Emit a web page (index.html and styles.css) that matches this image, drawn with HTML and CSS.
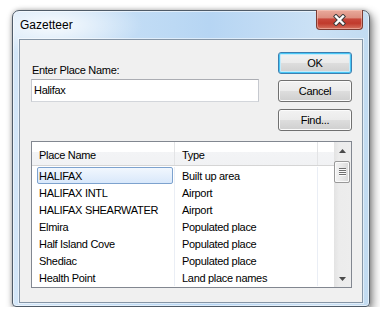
FILE: index.html
```html
<!DOCTYPE html>
<html lang="en">
<head>
  <meta charset="UTF-8">
  <title>Gazetteer</title>
  <link rel="stylesheet" href="styles.css">
</head>
<body>
  <div class="window">
    <div class="titlebar">
      <span class="title">Gazetteer</span>
      <button class="close" aria-label="Close">
        <svg width="13" height="12" viewBox="0 0 13 12">
          <path d="M3 2.5 L10 9.5 M10 2.5 L3 9.5" stroke="#3d3d3d" stroke-width="4.4" stroke-linecap="square"/>
          <path d="M3 2.5 L10 9.5 M10 2.5 L3 9.5" stroke="#ffffff" stroke-width="2.4" stroke-linecap="square"/>
        </svg>
      </button>
    </div>

    <div class="client">
      <div class="top">
        <div class="entry">
          <label class="label" for="place">Enter Place Name:</label>
          <input class="textbox" id="place" type="text" value="Halifax">
        </div>
        <div class="buttons">
          <button class="btn default">OK</button>
          <button class="btn">Cancel</button>
          <button class="btn find">Find...</button>
        </div>
      </div>

      <div class="listview">
        <div class="lv-main">
          <div class="lv-header">
            <div class="hcol">Place Name</div>
            <div class="hcol">Type</div>
            <div class="hcol last"></div>
          </div>
          <div class="lv-body">
            <div class="row"><div class="cell name"><div class="item selected">HALIFAX</div></div><div class="cell type">Built up area</div></div>
            <div class="row"><div class="cell name"><div class="item">HALIFAX INTL</div></div><div class="cell type">Airport</div></div>
            <div class="row"><div class="cell name"><div class="item">HALIFAX SHEARWATER</div></div><div class="cell type">Airport</div></div>
            <div class="row"><div class="cell name"><div class="item">Elmira</div></div><div class="cell type">Populated place</div></div>
            <div class="row"><div class="cell name"><div class="item">Half Island Cove</div></div><div class="cell type">Populated place</div></div>
            <div class="row"><div class="cell name"><div class="item">Shediac</div></div><div class="cell type">Populated place</div></div>
            <div class="row"><div class="cell name"><div class="item">Health Point</div></div><div class="cell type">Land place names</div></div>
          </div>
        </div>
        <div class="vscroll">
          <div class="arrow">
            <svg width="7" height="4" viewBox="0 0 7 4"><polygon points="3.5,0 7,4 0,4" fill="#4a4a4a"/></svg>
          </div>
          <div class="thumb">
            <svg width="7" height="8" viewBox="0 0 7 8">
              <path d="M0 0.5 H7 M0 2.5 H7 M0 4.5 H7 M0 6.5 H7" stroke="#6e6e6e" stroke-width="1"/>
              <path d="M0 1.5 H7 M0 3.5 H7 M0 5.5 H7 M0 7.5 H7" stroke="#fbfbfb" stroke-width="1"/>
            </svg>
          </div>
          <div class="track"></div>
          <div class="arrow">
            <svg width="7" height="4" viewBox="0 0 7 4"><polygon points="0,0 7,0 3.5,4" fill="#4a4a4a"/></svg>
          </div>
        </div>
      </div>
    </div>
  </div>
</body>
</html>
```

FILE: styles.css
```css
body {
  margin: 0;
  padding: 10px 0 0 12px;
  background: #ffffff;
  font-family: "Liberation Sans", Arial, sans-serif;
  font-size: 11px;
  color: #000000;
}
.window {
  width: 344px;
  padding: 0 6px 3px 6px;
  border: 1px solid #4f5b68;
  border-radius: 7px 7px 4px 4px;
  background:
    radial-gradient(ellipse 90px 30px at 40px 14px, rgba(255,255,255,0.85), rgba(255,255,255,0) 100%),
    linear-gradient(90deg, #d3e6f8 0%, #bcd9f4 45%, #b6d5f3 55%, #cbe1f5 85%, #c2dbf1 100%);
  box-shadow: inset 0 0 0 1px rgba(255,255,255,0.55), 3px 4px 10px rgba(0,0,0,0.45), 0 0 4px rgba(0,0,0,0.25);
}
.titlebar {
  height: 28px;
  display: flex;
  justify-content: space-between;
  align-items: flex-start;
}
.title {
  margin: 7px 0 0 1px;
  font-size: 12px;
  line-height: 14px;
  color: #000000;
}
.close {
  width: 47px;
  height: 20px;
  margin-top: -1px;
  padding: 0;
  border: 1px solid #7d3b32;
  border-top: none;
  border-radius: 0 0 4px 4px;
  background: linear-gradient(#e9aa9c 0%, #dd8f80 40%, #c8473a 48%, #c03a2c 70%, #d5725f 100%);
  box-shadow: inset 0 0 0 1px rgba(255,215,205,0.45);
  display: flex;
  align-items: center;
  justify-content: center;
}
.client {
  box-sizing: border-box;
  height: 264px;
  padding: 12px 10px 0 11px;
  border: 1px solid #8595a6;
  background: #f0f0f0;
  box-shadow: 0 0 0 1px rgba(255,255,255,0.5);
}
.top {
  display: flex;
  justify-content: space-between;
  letter-spacing: -0.3px;
}
.entry {
  display: flex;
  flex-direction: column;
  padding-top: 12px;
}
.label {
  padding-left: 1px;
  line-height: 13px;
  margin-bottom: 2px;
}
.textbox {
  box-sizing: border-box;
  width: 228px;
  height: 23px;
  margin: 0;
  padding: 0 2px 2px;
  border: 1px solid #abadb3;
  border-color: #abadb3 #c6c9cf #d3d6db #c6c9cf;
  background: #ffffff;
  font-family: "Liberation Sans", Arial, sans-serif;
  font-size: 11px;
  letter-spacing: -0.3px;
  color: #000000;
  outline: none;
}
.buttons {
  display: flex;
  flex-direction: column;
  gap: 6px;
}
.btn {
  width: 74px;
  height: 22px;
  padding: 0;
  border: 1px solid #707070;
  border-radius: 3px;
  background: linear-gradient(#f2f2f2 0%, #ebebeb 48%, #dddddd 52%, #cfcfcf 100%);
  box-shadow: inset 0 0 0 1px #fbfbfb;
  font-family: "Liberation Sans", Arial, sans-serif;
  font-size: 11px;
  letter-spacing: -0.3px;
  line-height: 20px;
  color: #000000;
}
.btn.default {
  border-color: #3c7fb1;
  box-shadow: inset 0 0 0 1px #48c6f5, inset 0 0 0 2px #c4ebfb;
}
.btn.find {
  margin-top: 1px;
}
.listview {
  margin-top: 10px;
  height: 145px;
  border: 1px solid #828790;
  background: #ffffff;
  display: flex;
  letter-spacing: -0.3px;
}
.lv-main {
  width: 302px;
}
.lv-header {
  display: grid;
  grid-template-columns: 143px 143px 16px;
  height: 23px;
  border-bottom: 1px solid #d5d5d5;
  background: linear-gradient(#ffffff 0%, #ffffff 42%, #f3f4f6 42%, #f1f2f4 100%);
}
.hcol {
  padding: 3px 0 0 7px;
  line-height: 20px;
  border-right: 1px solid #e3e4e6;
  overflow: hidden;
}
.hcol.last {
  border-right: none;
}
.lv-body {
  padding-top: 1px;
}
.row {
  display: grid;
  grid-template-columns: 143px 143px 16px;
  height: 17px;
}
.cell {
  white-space: nowrap;
}
.cell.name {
  border-right: 1px solid #eaeef5;
  padding: 0 1px 0 5px;
}
.item {
  height: 14px;
  padding: 1px 0 0 1px;
  line-height: 14px;
  border: 1px solid transparent;
  border-radius: 2px;
}
.item.selected {
  border-color: #7da2ce;
  background: linear-gradient(#f1f7fe 0%, #e3eefc 60%, #d8e8fb 100%);
}
.cell.type {
  padding: 2px 0 0 7px;
  line-height: 14px;
  border-right: 1px solid #eaeef5;
}
.vscroll {
  width: 17px;
  display: flex;
  flex-direction: column;
  background: linear-gradient(90deg, #e3e3e3 0%, #ececec 30%, #ededed 100%);
}
.arrow {
  height: 17px;
  display: flex;
  align-items: center;
  justify-content: center;
}
.thumb {
  box-sizing: border-box;
  width: 16px;
  height: 22px;
  margin-top: 2px;
  border: 1px solid #999999;
  border-radius: 2px;
  background: linear-gradient(90deg, #f3f3f3 0%, #e8e8e8 50%, #d9d9d9 100%);
  box-shadow: inset 0 0 0 1px #fafafa;
  display: flex;
  align-items: center;
  justify-content: center;
}
.track {
  flex: 1;
}
```
